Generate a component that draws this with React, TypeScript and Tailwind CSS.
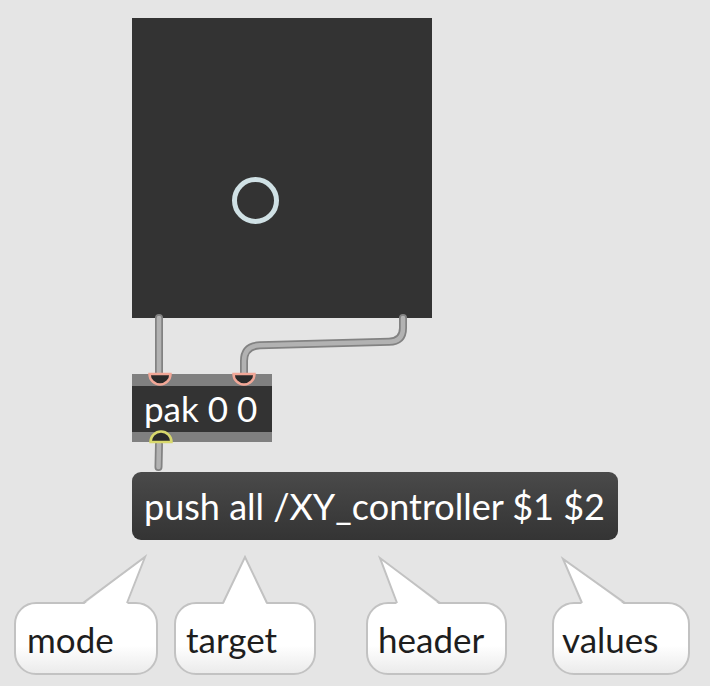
import React from "react";

type BubbleProps = {
  left: number;
  top: number;
  width: number;
  height: number;
  base1: number;
  base2: number;
  tipX: number;
  tipY: number;
  text: string;
  textLeft: number;
};

function Bubble({ left, top, width, height, base1, base2, tipX, tipY, text, textLeft }: BubbleProps) {
  return (
    <div
      className="absolute rounded-[22px] border-2 border-[#c2c2c2] bg-gradient-to-b from-white from-60% to-[#ebebeb]"
      style={{ left, top, width, height }}
    >
      <svg
        className="absolute overflow-visible"
        style={{ left: -2, top: -2 }}
        width={width}
        height={height}
      >
        <polygon points={`${base1},3 ${tipX},${tipY} ${base2},3`} fill="#ffffff" />
        <polyline
          points={`${base1},1 ${tipX},${tipY} ${base2},1`}
          fill="none"
          stroke="#c2c2c2"
          strokeWidth={2}
          strokeLinejoin="miter"
        />
      </svg>
      <div
        className="absolute text-[35px] leading-none text-[#1e1e1e] whitespace-nowrap"
        style={{ left: textLeft, top: 18, fontFamily: "Lato, 'Noto Sans', sans-serif" }}
      >
        {text}
      </div>
    </div>
  );
}

function Cable({ d }: { d: string }) {
  return (
    <g>
      <path d={d} fill="none" stroke="#828282" strokeWidth={8} strokeLinecap="round" strokeLinejoin="round" />
      <path d={d} fill="none" stroke="#b2b2b2" strokeWidth={4.5} strokeLinecap="round" strokeLinejoin="round" />
    </g>
  );
}

export default function App() {
  const font = { fontFamily: "Lato, 'Noto Sans', sans-serif" };
  return (
    <div className="relative w-[710px] h-[686px] overflow-hidden bg-[#e5e5e5]" style={font}>
      {/* XY pad */}
      <div className="absolute left-[132px] top-[18px] w-[300px] h-[300px] bg-[#333333]">
        <svg width={300} height={300} className="absolute left-0 top-0">
          <circle cx={123.5} cy={182.5} r={21} fill="none" stroke="#d0e1e5" strokeWidth={5} />
        </svg>
      </div>

      {/* pak object */}
      <div className="absolute left-[132px] top-[374px] w-[140px] h-[68px] flex flex-col">
        <div className="h-[12px] bg-[#808080]" />
        <div className="h-[46px] bg-[#333333] flex items-center pl-[12px] text-[35px] text-white leading-none whitespace-nowrap">
          <span className="-mt-[1px]">pak 0 0</span>
        </div>
        <div className="h-[10px] bg-[#808080]" />
      </div>

      {/* message box */}
      <div className="absolute left-[132px] top-[472px] w-[486px] h-[68px] rounded-[9px] bg-gradient-to-b from-[#4a4a4a] to-[#343434] flex items-center pl-[12px] text-[36px] text-white leading-none whitespace-nowrap">
        <span>push all /XY_controller $1 $2</span>
      </div>

      {/* cables + ports */}
      <svg className="absolute left-0 top-0 pointer-events-none" width={710} height={686}>
        <Cable d="M159 318 L159 375" />
        <Cable d="M403 318 L403 328 Q403 341.5 389 341.8 L260 345.3 Q244 346 244 361 L244 375" />
        <Cable d="M159 444 L158.5 467" />
        <path d="M149.5 374 A10.5 10.5 0 0 0 170.5 374 Z" fill="#2a2a2a" stroke="#f2a797" strokeWidth={2.5} />
        <path d="M233.5 374 A10.5 10.5 0 0 0 254.5 374 Z" fill="#2a2a2a" stroke="#f2a797" strokeWidth={2.5} />
        <path d="M150.5 442 A10.5 10.5 0 0 1 171.5 442 Z" fill="#2a2a2a" stroke="#d8d86c" strokeWidth={2.5} />
      </svg>

      {/* comments */}
      <Bubble left={14} top={602} width={144} height={73} base1={69} base2={113} tipX={131} tipY={-45} text="mode" textLeft={11} />
      <Bubble left={174} top={602} width={142} height={73} base1={49} base2={93} tipX={71} tipY={-45} text="target" textLeft={10} />
      <Bubble left={366} top={602} width={141} height={73} base1={31} base2={74} tipX={14} tipY={-44} text="header" textLeft={10} />
      <Bubble left={552} top={602} width={138} height={73} base1={30} base2={73} tipX={11} tipY={-43} text="values" textLeft={8} />
    </div>
  );
}
